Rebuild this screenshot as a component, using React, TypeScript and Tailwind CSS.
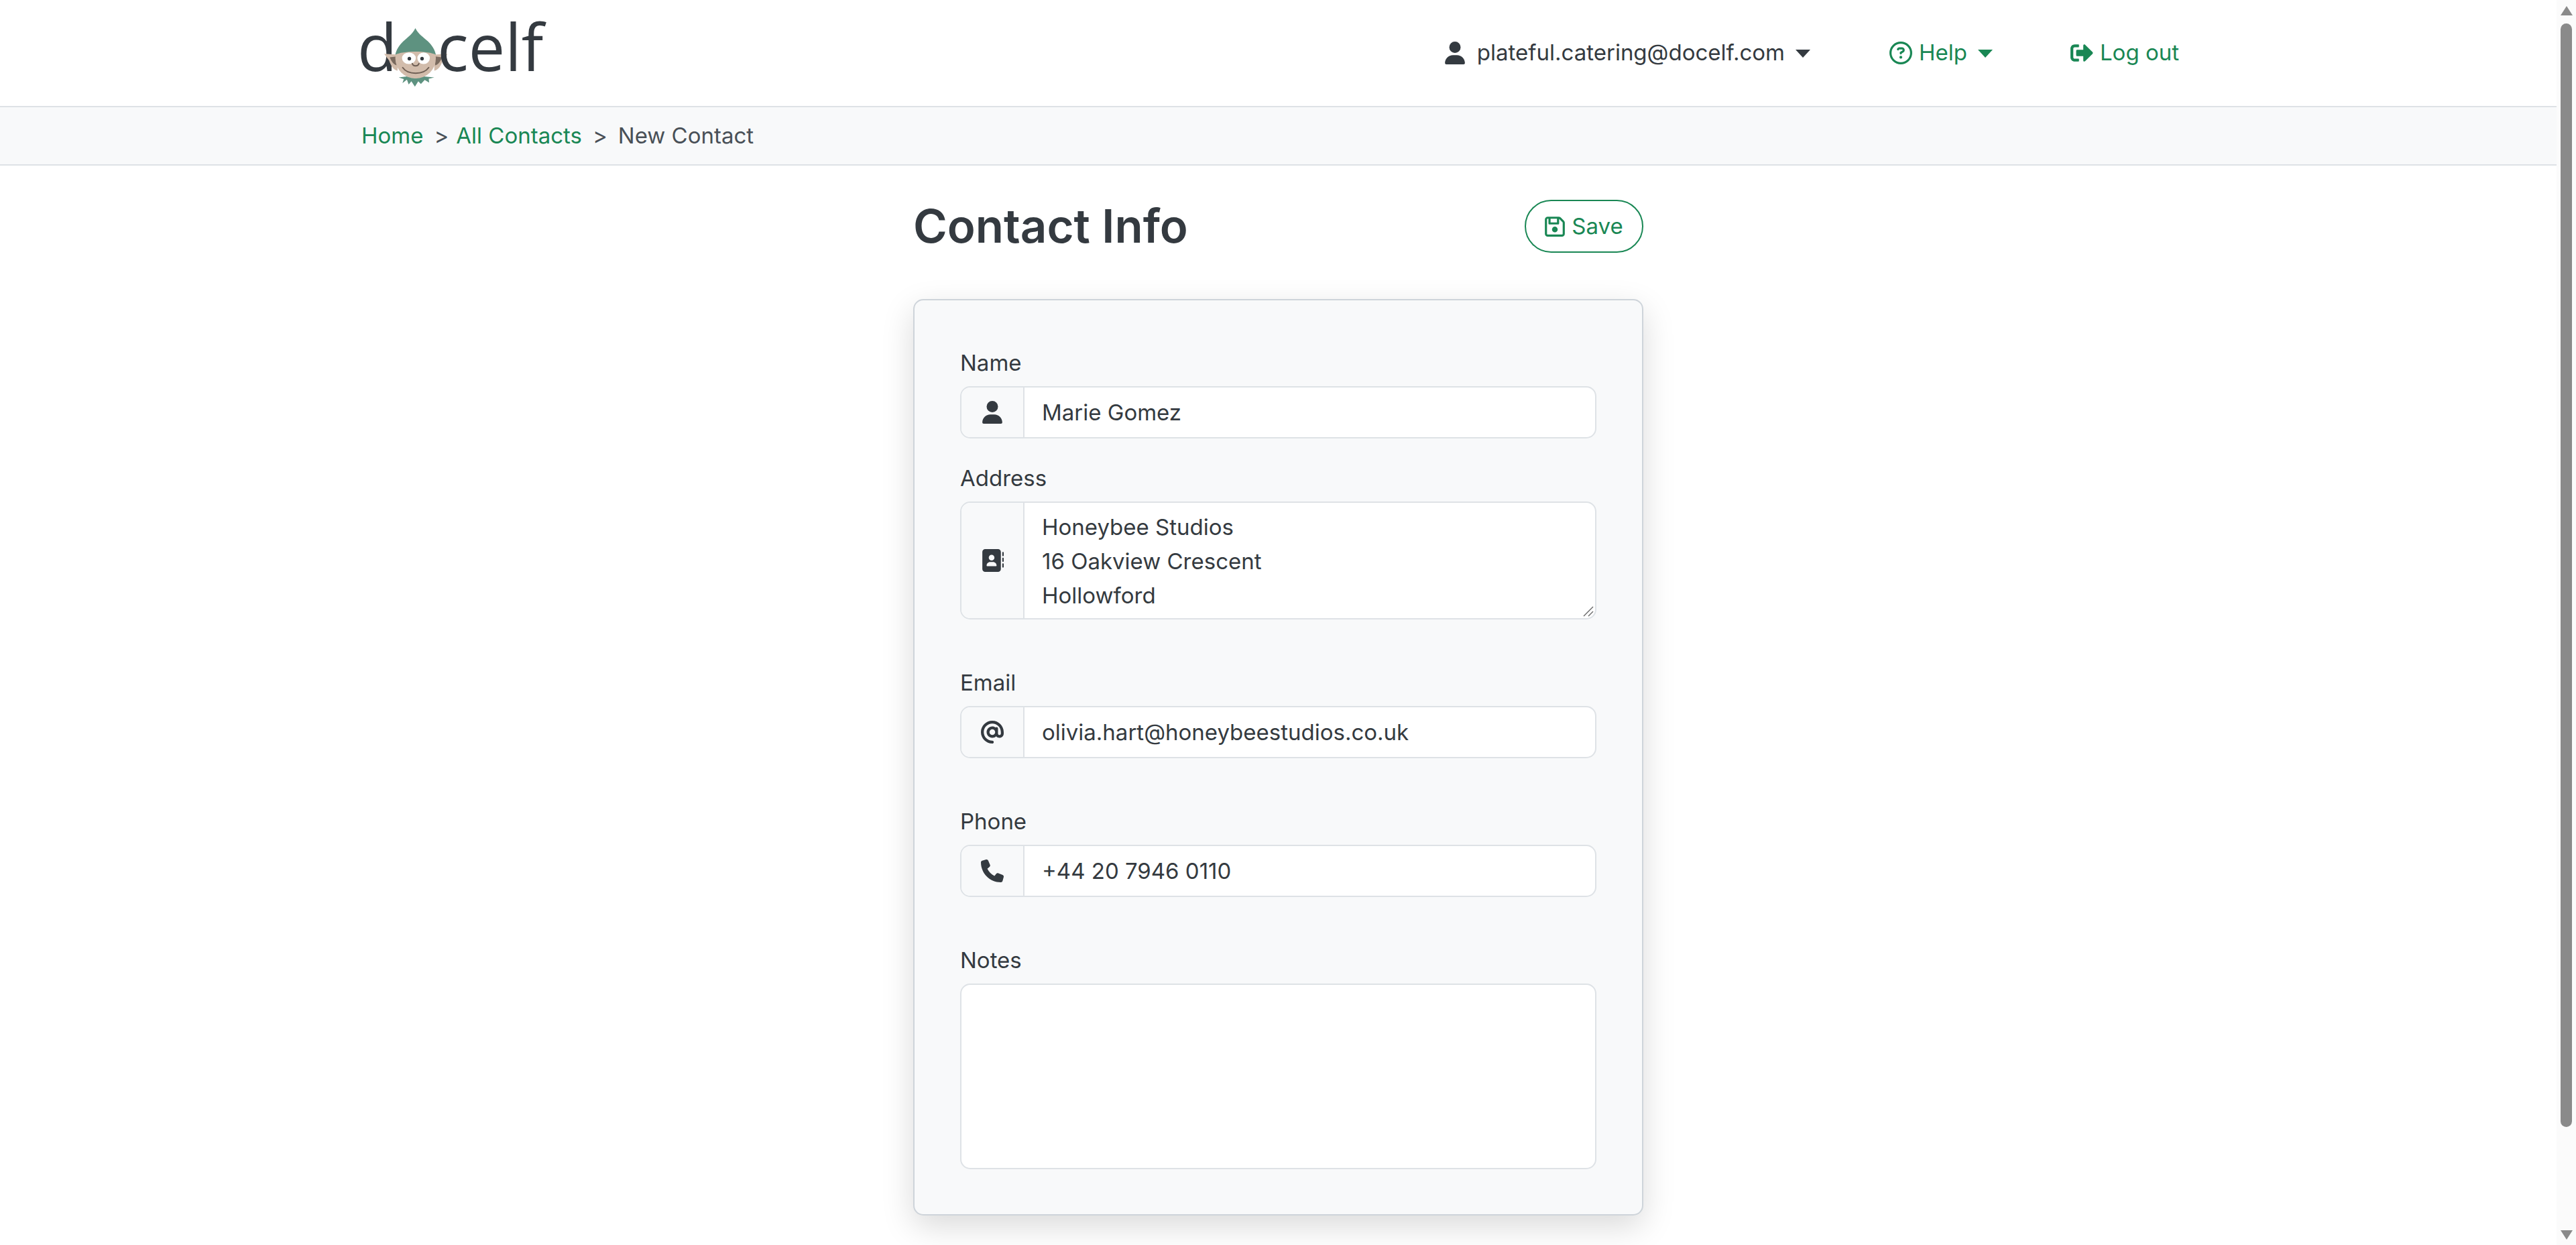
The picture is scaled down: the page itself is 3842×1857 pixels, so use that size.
import { FaUser, FaAddressBook, FaAt, FaPhone, FaRegFloppyDisk, FaRegCircleQuestion } from 'react-icons/fa6';
import { FaSignOutAlt } from 'react-icons/fa';

const GREEN = 'text-[#198754]';

// docelf elf head sits in place of the "o"
function ElfHead() {
  return (
    <svg viewBox="128 42 290 268" className="w-[97px] h-[89px] -ml-[20px] -mr-[17px] -mb-[14px] shrink-0">
      <path d="M130 160 L190 164 L190 236 C170 232 160 212 152 190 Z" fill="#d2bcab" />
      <path d="M415 160 L355 164 L355 236 C375 232 385 212 393 190 Z" fill="#d2bcab" />
      <path d="M155 176 L186 172 L186 212 C170 208 162 192 155 176 Z" fill="#7a6a5e" />
      <path d="M390 176 L359 172 L359 212 C375 208 383 192 390 176 Z" fill="#7a6a5e" />
      <path d="M195 266 L232 262 L270 270 L308 262 L355 266 L330 272 L332 290 L312 278 L295 296 L283 284 L268 308 L252 284 L240 298 L232 276 L212 292 L218 274 Z" fill="#5e9280" />
      <circle cx="271" cy="180" r="91" fill="#d2bcab" />
      <path d="M270 45 C284 72 304 84 326 104 C344 122 358 142 362 165 C330 146 212 146 180 165 C184 142 198 122 216 104 C238 84 256 72 270 45 Z" fill="#5e9280" />
      <ellipse cx="241" cy="180" rx="31" ry="26" fill="#fff" />
      <ellipse cx="307" cy="180" rx="28" ry="26" fill="#fff" />
      <circle cx="243" cy="182" r="8" fill="#343a40" />
      <circle cx="300" cy="182" r="8" fill="#343a40" />
      <path d="M256 204 C260 218 282 218 286 204" fill="none" stroke="#6f5f54" strokeWidth="6" strokeLinecap="round" />
      <path d="M213 222 C236 256 306 256 330 222" fill="none" stroke="#6f5f54" strokeWidth="6" strokeLinecap="round" />
    </svg>
  );
}

function ElfLogo() {
  return (
    <div className="flex items-end h-[96px] mb-[22px] text-[#343a40] font-['Open_Sans','Noto_Sans',sans-serif] text-[97px] leading-[96px]">
      <span>d</span>
      <ElfHead />
      <span>celf</span>
    </div>
  );
}

function Caret() {
  return <span className="ml-[16px] inline-block border-x-[11px] border-t-[12px] border-x-transparent border-t-current mt-[2px]" />;
}

function Field({ label, icon, value, className }: { label: string; icon: React.ReactNode; value: string; className: string }) {
  return (
    <div className={className}>
      <label className="block h-[51px] mb-[9px] leading-[51px]">{label}</label>
      <div className="flex h-[78px] rounded-[15px] border-2 border-[#dee2e6] bg-white overflow-hidden">
        <span className="w-[94px] shrink-0 flex items-center justify-center bg-[#f8f9fa] border-r-2 border-[#dee2e6] text-[#343a40]">{icon}</span>
        <span className="flex-1 pl-[26px] leading-[74px]">{value}</span>
      </div>
    </div>
  );
}

export default function App() {
  return (
    <div className="flex h-[1857px] overflow-hidden bg-white text-[#343a40] text-[33px] font-['Inter','Noto_Sans',sans-serif]">
      <div className="flex-1 min-w-0">
        <header className="h-[160px] border-b-2 border-[#dee2e6] flex items-center pl-[533px] pr-[563px] justify-between">
          <ElfLogo />
          <nav className="flex items-center">
            <FaUser className="w-[30px] h-[34px] mr-[18px]" />
            <span>plateful.catering@docelf.com</span>
            <Caret />
            <span className={`flex items-center ml-[118px] ${GREEN}`}>
              <FaRegCircleQuestion className="w-[34px] h-[34px] mr-[10px]" />
              Help
              <Caret />
            </span>
            <span className={`flex items-center ml-[116px] ${GREEN}`}>
              <FaSignOutAlt className="w-[34px] h-[34px] mr-[10px]" />
              Log out
            </span>
          </nav>
        </header>
        <div className="h-[87px] bg-[#f8f9fa] border-b-2 border-[#dee2e6] flex items-center pl-[539px] text-[#495057]">
          <span className={GREEN}>Home</span>
          <span className="ml-[16px] mr-[11px]">&gt;</span>
          <span className={GREEN}>All Contacts</span>
          <span className="mx-[16px]">&gt;</span>
          <span>New Contact</span>
        </div>
        <main className="w-[1089px] ml-[1362px]">
          <div className="flex items-center justify-between h-[79px] mt-[51px]">
            <h1 className="text-[69px] font-semibold leading-none">Contact Info</h1>
            <button className={`flex items-center h-[79px] w-[177px] justify-center rounded-full border-2 border-[#198754] ${GREEN}`}>
              <FaRegFloppyDisk className="w-[30px] h-[34px] mr-[10px]" />
              Save
            </button>
          </div>
          <section className="mt-[69px] h-[1367px] rounded-[15px] border-2 border-[#ced4da] bg-[#f8f9fa] shadow-[0_16px_48px_rgba(0,0,0,0.15)] px-[68px] pt-[68px]">
            <Field label="Name" icon={<FaUser className="w-[30px] h-[34px]" />} value="Marie Gomez" className="mb-[34px]" />
            <div className="mb-[69px]">
              <label className="block h-[51px] mb-[9px] leading-[51px]">Address</label>
              <div className="flex h-[176px] rounded-[15px] border-2 border-[#dee2e6] bg-white overflow-hidden relative">
                <span className="w-[94px] shrink-0 flex items-center justify-center bg-[#f8f9fa] border-r-2 border-[#dee2e6]">
                  <FaAddressBook className="w-[34px] h-[34px]" />
                </span>
                <div className="flex-1 pl-[26px] pt-[11px] leading-[51px]">
                  <div>Honeybee Studios</div>
                  <div>16 Oakview Crescent</div>
                  <div>Hollowford</div>
                </div>
                <svg viewBox="0 0 16 16" className="absolute right-[2px] bottom-[2px] w-[16px] h-[16px]">
                  <path d="M15 1 L1 15 M15 8 L8 15" stroke="#666" strokeWidth="1.4" />
                </svg>
              </div>
            </div>
            <Field label="Email" icon={<FaAt className="w-[34px] h-[34px]" />} value="olivia.hart@honeybeestudios.co.uk" className="mb-[69px]" />
            <Field label="Phone" icon={<FaPhone className="w-[34px] h-[34px]" />} value="+44 20 7946 0110" className="mb-[69px]" />
            <label className="block h-[51px] mb-[9px] leading-[51px]">Notes</label>
            <div className="h-[277px] rounded-[15px] border-2 border-[#dee2e6] bg-white" />
          </section>
        </main>
      </div>
      <aside className="w-[29px] shrink-0 bg-[#fbfbfb] flex flex-col items-center">
        <span className="mt-[9px] border-x-[9px] border-b-[14px] border-x-transparent border-b-[#8a8a8a]" />
        <div className="mt-[12px] h-[1646px] w-[17px] rounded-full bg-[#8a8a8a]" />
        <span className="mt-auto mb-[8px] border-x-[9px] border-t-[14px] border-x-transparent border-t-[#8a8a8a]" />
      </aside>
    </div>
  );
}
